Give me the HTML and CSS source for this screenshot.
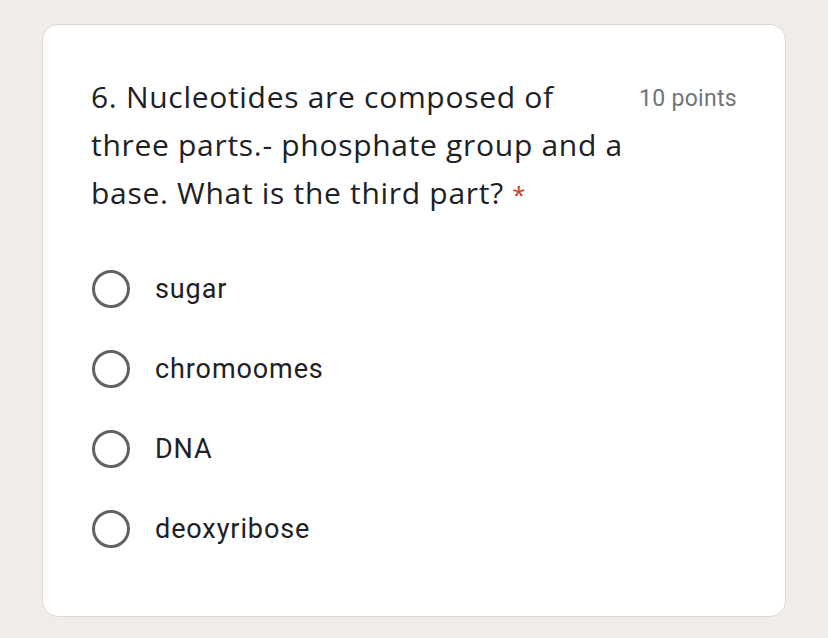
FILE: index.html
```html
<!DOCTYPE html>
<html>
<head>
<meta charset="utf-8">
<link rel="stylesheet" href="styles.css">
</head>
<body>
<div class="card">
  <div class="header">
    <div class="question">6. Nucleotides are composed of three parts.- phosphate group and a base. What is the third part? <span class="req">*</span></div>
    <div class="points">10 points</div>
  </div>
  <div class="options">
    <div class="option"><span class="radio"></span><span class="label">sugar</span></div>
    <div class="option"><span class="radio"></span><span class="label">chromoomes</span></div>
    <div class="option"><span class="radio"></span><span class="label">DNA</span></div>
    <div class="option"><span class="radio"></span><span class="label">deoxyribose</span></div>
  </div>
</div>
</body>
</html>
```
FILE: styles.css
```css
html, body { margin: 0; padding: 0; }
body {
  background: #f0ede8;
  width: 828px;
  height: 638px;
  overflow: hidden;
  padding: 24px 0 0 42px;
  box-sizing: border-box;
}
.card {
  width: 744px;
  height: 593px;
  box-sizing: border-box;
  background: #fff;
  border: 1.5px solid #dcdad6;
  border-radius: 16px;
  padding: 48px 48px 0 48px;
}
.header {
  display: flex;
  justify-content: space-between;
  align-items: flex-start;
}
.question {
  width: 545px;
  font-family: "Open Sans", sans-serif;
  font-size: 30px;
  line-height: 48px;
  color: #202124;
  letter-spacing: 0.7px;
}
.req { color: #c5392a; font-size: 24px; }
.points {
  font-family: Roboto, sans-serif;
  font-size: 23px;
  color: #70757a;
  line-height: 48px;
  letter-spacing: 0.3px;
  margin-top: 2px;
}
.options {
  margin-top: 30px;
  display: flex;
  flex-direction: column;
}
.option {
  height: 80px;
  display: flex;
  align-items: center;
}
.radio {
  width: 38px;
  height: 38px;
  box-sizing: border-box;
  border: 3px solid #5f6368;
  border-radius: 50%;
  margin-left: 1px;
  margin-right: 25px;
}
.label {
  font-family: Roboto, sans-serif;
  font-size: 27px;
  color: #202124;
  letter-spacing: 0.9px;
}
```
